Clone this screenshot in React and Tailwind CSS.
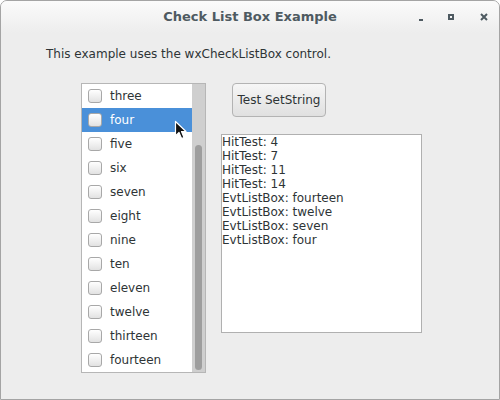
const items = ['three', 'four', 'five', 'six', 'seven', 'eight', 'nine', 'ten', 'eleven', 'twelve', 'thirteen', 'fourteen'];

const log = [
  'HitTest: 4',
  'HitTest: 7',
  'HitTest: 11',
  'HitTest: 14',
  'EvtListBox: fourteen',
  'EvtListBox: twelve',
  'EvtListBox: seven',
  'EvtListBox: four',
];

function CheckBox() {
  return (
    <span className="block h-[14px] w-[14px] rounded-[3px] border border-[#a8a8a8] bg-gradient-to-b from-[#ffffff] to-[#e2e2e2]" />
  );
}

function Cursor() {
  return (
    <svg className="absolute left-[173px] top-[119px]" width="16" height="22" viewBox="0 0 16 22">
      <path d="M1.5 1.5 L1.5 16 L5 12.5 L7.5 18.5 L10 17.5 L7.5 11.5 L12 11.5 Z" fill="#111" stroke="#fff" strokeWidth="1.2" strokeLinejoin="round" />
    </svg>
  );
}

export default function App() {
  return (
    <div
      className="relative flex h-[400px] w-[500px] flex-col overflow-hidden rounded-t-[7px] border border-[#a4a4a4] bg-[#ededed] text-[#2e3436]"
      style={{ fontFamily: '"DejaVu Sans", sans-serif' }}
    >
      <div className="relative flex h-[32px] shrink-0 items-center justify-center bg-gradient-to-b from-[#fbfbfb] to-[#ededed]">
        <span className="text-[13px] font-bold text-[#4e5a61]">Check List Box Example</span>
        <div className="absolute right-0 top-0 flex h-[32px] items-center">
          <span className="absolute left-[-80px] top-[18px] h-[2px] w-[4px] bg-[#4e5a61]" />
          <span className="absolute left-[-51px] top-[13px] h-[6px] w-[6px] border-2 border-[#4e5a61]" />
          <svg className="absolute left-[-19px] top-[12px]" width="8" height="8" viewBox="0 0 8 8">
            <path d="M1 1 L7 7 M7 1 L1 7" stroke="#4e5a61" strokeWidth="2" />
          </svg>
        </div>
      </div>

      <div className="pl-[45px] pt-[13px] text-[12px] leading-[16px]">
        This example uses the wxCheckListBox control.
      </div>

      <div className="mt-[21px] flex gap-[15px] pl-[80px]">
        <div className="flex h-[290px] w-[125px] border border-[#b6b6b6] bg-white">
          <div className="flex-1">
            {items.map((it) => {
              const sel = it === 'four';
              return (
                <div
                  key={it}
                  className={`flex h-[24px] items-center gap-[8px] pl-[6px] text-[12px] ${sel ? 'bg-[#4a90d9] text-white' : ''}`}
                >
                  <CheckBox />
                  <span>{it}</span>
                </div>
              );
            })}
          </div>
          <div className="flex w-[13px] flex-col bg-[#cfcfcf] px-[3px] pb-[2px] pt-[61px]">
            <div className="flex-1 rounded-full bg-[#9e9e9e]" />
          </div>
        </div>

        <div className="flex flex-col">
          <button className="ml-[11px] h-[34px] w-[94px] rounded-[4px] border border-[#b3b3b3] bg-gradient-to-b from-[#f6f6f6] to-[#e0e0e0] text-[12px] text-[#2e3436]">
            Test SetString
          </button>
          <div className="mt-[17px] h-[199px] w-[201px] border border-[#b0b0b0] bg-white text-[12px] leading-[14px]">
            {log.map((l) => (
              <div key={l}>{l}</div>
            ))}
          </div>
        </div>
      </div>

      <Cursor />
    </div>
  );
}
